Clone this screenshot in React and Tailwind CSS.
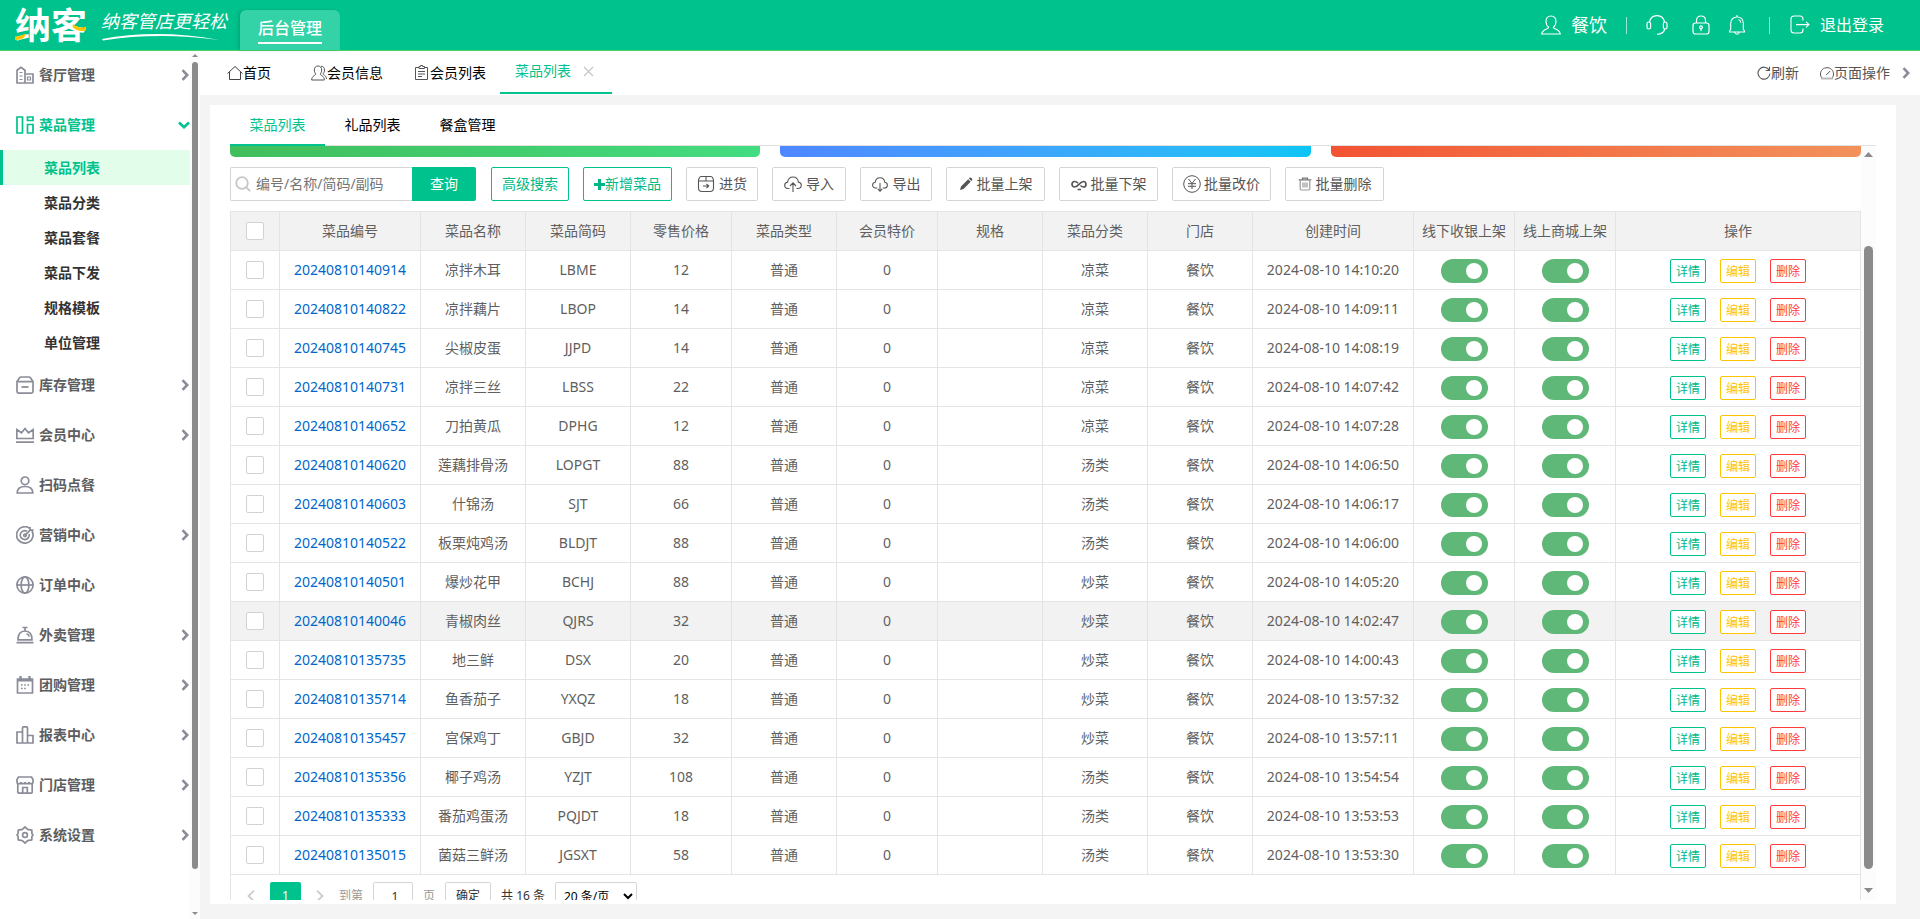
import React from "react";

const dishes = [
  ["20240810140914", "凉拌木耳", "LBME", 12, "凉菜", "2024-08-10 14:10:20"],
  ["20240810140822", "凉拌藕片", "LBOP", 14, "凉菜", "2024-08-10 14:09:11"],
  ["20240810140745", "尖椒皮蛋", "JJPD", 14, "凉菜", "2024-08-10 14:08:19"],
  ["20240810140731", "凉拌三丝", "LBSS", 22, "凉菜", "2024-08-10 14:07:42"],
  ["20240810140652", "刀拍黄瓜", "DPHG", 12, "凉菜", "2024-08-10 14:07:28"],
  ["20240810140620", "莲藕排骨汤", "LOPGT", 88, "汤类", "2024-08-10 14:06:50"],
  ["20240810140603", "什锦汤", "SJT", 66, "汤类", "2024-08-10 14:06:17"],
  ["20240810140522", "板栗炖鸡汤", "BLDJT", 88, "汤类", "2024-08-10 14:06:00"],
  ["20240810140501", "爆炒花甲", "BCHJ", 88, "炒菜", "2024-08-10 14:05:20"],
  ["20240810140046", "青椒肉丝", "QJRS", 32, "炒菜", "2024-08-10 14:02:47"],
  ["20240810135735", "地三鲜", "DSX", 20, "炒菜", "2024-08-10 14:00:43"],
  ["20240810135714", "鱼香茄子", "YXQZ", 18, "炒菜", "2024-08-10 13:57:32"],
  ["20240810135457", "宫保鸡丁", "GBJD", 32, "炒菜", "2024-08-10 13:57:11"],
  ["20240810135356", "椰子鸡汤", "YZJT", 108, "汤类", "2024-08-10 13:54:54"],
  ["20240810135333", "番茄鸡蛋汤", "PQJDT", 18, "汤类", "2024-08-10 13:53:53"],
  ["20240810135015", "菌菇三鲜汤", "JGSXT", 58, "汤类", "2024-08-10 13:53:30"],
];

const HIGHLIGHTED = "20240810140046";

const columns = [
  ["菜品编号", "w-[141px]"],
  ["菜品名称", "w-[105px]"],
  ["菜品简码", "w-[105px]"],
  ["零售价格", "w-[101px]"],
  ["菜品类型", "w-[105px]"],
  ["会员特价", "w-[101px]"],
  ["规格", "w-[105px]"],
  ["菜品分类", "w-[105px]"],
  ["门店", "w-[105px]"],
  ["创建时间", "w-[161px]"],
  ["线下收银上架", "w-[101px]"],
  ["线上商城上架", "w-[101px]"],
  ["操作", ""],
];

function Icon({ className = "size-[18px]", box = 18, width = 1.7, children }) {
  return (
    <svg
      className={className + " shrink-0"}
      viewBox={`0 0 ${box} ${box}`}
      fill="none"
      stroke="currentColor"
      strokeWidth={width}
      aria-hidden="true"
    >
      {children}
    </svg>
  );
}

const sideIcons = {
  building: (
    <>
      <path d="M1 17V4.2L5 1.2l4 3V17" />
      <path d="M9 8h8v9H.4" />
      <path d="M3.5 6.5h3M3.5 10h3M3.5 13.5h3M11.5 11h3v3h-3z" strokeWidth="1.2" />
    </>
  ),
  board: (
    <>
      <path d="M1 1h5.5v16H1zM11.5 1h5.5v3.5h-5.5zM11.5 8.5h5.5V17h-5.5z" />
    </>
  ),
  box: (
    <>
      <path d="M1 6.2v9.3c0 1 .6 1.6 1.6 1.6h12.8c1 0 1.6-.6 1.6-1.6V6.2" />
      <path d="M1 5.6h16L14.6 2c-.5-.7-.9-1-1.7-1H5.1c-.8 0-1.2.3-1.7 1z" />
      <path d="M5.5 11h7" strokeWidth="1.8" />
    </>
  ),
  crown: <path d="M.8 12.5V3.5L5.5 6.8 9 2.5l3.5 4.3 4.7-3.3v9zM0 16.2h18" />,
  user: (
    <>
      <circle cx="9" cy="4.8" r="3.8" />
      <path d="M1.2 17c0-4.3 3-6.5 7.8-6.5s7.8 2.2 7.8 6.5z" />
    </>
  ),
  target: (
    <>
      <path d="M13.6 2.3A8.2 8.2 0 1 0 16 5" />
      <path d="M11 5.2A4.5 4.5 0 1 0 13.1 8" />
      <circle cx="9" cy="9.3" r="1.3" />
      <path d="M9 9.3 15 3.2M14 1v3.2h3.5" />
    </>
  ),
  globe: (
    <>
      <circle cx="9" cy="9" r="8.1" />
      <ellipse cx="9" cy="9" rx="3.9" ry="8.1" />
      <path d="M1 9h16" />
    </>
  ),
  bell: (
    <>
      <path d="M2 13.8C1.8 8 4.6 5 9 5s7.2 3 7 8.8zM.5 16.7h17M9 5V2M6.5 1.5h5" />
      <path d="M10.5 7.8c1.5.4 2.4 1.3 2.8 2.8" />
    </>
  ),
  calendar: (
    <>
      <path d="M1.5 3h15v14h-15z" />
      <path d="M1.5 4.2h15M4.5 0v4M13.5 0v4" strokeWidth="2.4" />
      <path d="M5 9h1.6M8.2 9h1.6M11.5 9h1.6M5 12.5h1.6M8.2 12.5h1.6" />
    </>
  ),
  bars: <path d="M1 6h5.5v11H1zM6.5 17V1.8c0-.6.3-.9.9-.9h3.2c.6 0 .9.3.9.9V17zM11.5 9.5H17V17h-5.5" />,
  shop: (
    <>
      <path d="M1.8 8v8.2c0 .6.4.9 1 .9h12.4c.6 0 1-.3 1-.9V8" />
      <path d="M2.5 1h13L17 3.5V6c0 1-.8 1.7-1.9 1.7S13 7 13 6c0 1-.9 1.7-2 1.7S9 7 9 6c0 1-.9 1.7-2 1.7S5 7 5 6c0 1-.9 1.7-2.1 1.7S1 7 1 6V3.5zM6.7 17v-5.5h4.6V17" />
    </>
  ),
  gear: (
    <>
      <path d="M9 .9 11.6 3.4l4.2.7.1 3.400L17 9l-1.100 1.500-.1 3.400-4.200.7L9 17.100l-2.600-2.500-4.200-.7-.1-3.400L1 9l1.100-1.500.1-3.400 4.200-.7z" strokeLinejoin="round" />
      <circle cx="9" cy="9" r="2.4" />
    </>
  ),
};

const menu = [
  ["餐厅管理", "building", true],
  ["菜品管理", "board", true, ["菜品列表", "菜品分类", "菜品套餐", "菜品下发", "规格模板", "单位管理"]],
  ["库存管理", "box", true],
  ["会员中心", "crown", true],
  ["扫码点餐", "user", false],
  ["营销中心", "target", true],
  ["订单中心", "globe", false],
  ["外卖管理", "bell", true],
  ["团购管理", "calendar", true],
  ["报表中心", "bars", true],
  ["门店管理", "shop", true],
  ["系统设置", "gear", true],
];

function Chevron({ down }) {
  return (
    <svg
      className={down ? "h-2 w-3 shrink-0 text-[#00c28c]" : "h-3 w-2 shrink-0 text-[#8a8c98]"}
      viewBox={down ? "0 0 12 8" : "0 0 8 12"}
      fill="none"
      stroke="currentColor"
      strokeWidth="2.6"
      aria-hidden="true"
    >
      <path d={down ? "M1 1.5 6 6.2 11 1.5" : "M1.5 1.2 6.2 6 1.5 10.8"} />
    </svg>
  );
}

function Header() {
  return (
    <header className="relative z-10 flex h-[50px] shrink-0 items-center bg-[#00c28c] pr-9 text-white shadow-[0_1px_0_#4bd06f]">
      <div className="flex w-60 items-center pl-[15px]">
        <div className="relative h-[50px] w-[72px]">
          <span className="text-[36px] leading-[52px] font-bold">纳客</span>
          <svg className="absolute inset-0" viewBox="0 0 72 50" fill="#fdc400" aria-hidden="true">
            <path d="M0 36.500c4 0 7-1 10.500-3l-1 3.500c-3 2.500-6 3.200-9.500 3zM58 24c4 3.500 8 4.300 13 2.500l-.5 4c-5 1.500-9 .2-13-3.500z" />
          </svg>
        </div>
        <div className="ml-[14px] flex flex-col">
          <span className="text-[18px] leading-6 italic">纳客管店更轻松</span>
          <svg className="h-2 w-[120px]" viewBox="0 0 120 8" aria-hidden="true">
            <path d="M1 6C36-.5 76-1 118 7 76 1.5 38 2 2 7.5z" fill="#fff" />
          </svg>
        </div>
      </div>
      <a href="#admin" className="flex h-10 w-[100px] flex-col items-center self-end rounded-t-md bg-[#33d2a7] pt-[7px] shadow-[-2px_0_3px_rgba(0,120,80,0.3)]">
        <span className="border-b-2 border-white pb-[3px] text-base leading-[22px] font-medium">后台管理</span>
      </a>
      <div className="ml-auto flex items-center">
        <a href="#user" className="flex items-center gap-[10px]">
          <Icon className="size-5" box={20} width={1.1}>
            <path d="M7.7 12.3C5.8 11 5 9 5 6.3 5 3 7 1 10 1s5 2 5 5.3c0 2.7-.8 4.7-2.7 6 .1 2.2 6.2 1.5 7 6.7H.7c.8-5.200 6.900-4.500 7-6.700z" />
          </Icon>
          <span className="text-[18px]">餐饮</span>
        </a>
        <span className="mx-[19px] h-[17px] w-px bg-white/60" />
        <button aria-label="客服">
          <Icon className="size-[22px]" box={22} width={1.2}>
            <path d="M3.5 8.2C4.2 4 7.200 1.700 11 1.700S17.800 4 18.500 8.200" />
            <rect x="1" y="8" width="3.600" height="7" rx="1.800" />
            <rect x="17.400" y="8" width="3.600" height="7" rx="1.800" />
            <path d="M18.800 15c-.9 3.300-3.600 5.200-7.800 5.400" />
          </Icon>
        </button>
        <button aria-label="锁屏" className="ml-[23px]">
          <Icon className="size-5" box={20} width={1.2}>
            <path d="M5.5 8V5.5C5.5 2.5 7.3 1 10 1s4.5 1.5 4.5 4.5V8M2 10.500C2 8.800 2.800 8 4.500 8h11c1.700 0 2.500.8 2.500 2.500v6c0 1.700-.8 2.500-2.500 2.500h-11C2.800 19 2 18.200 2 16.500zM10 13.700v2.300" />
            <circle cx="10" cy="12.3" r="1.4" />
          </Icon>
        </button>
        <button aria-label="通知" className="ml-4">
          <Icon className="size-5" box={20} width={1.1}>
            <path d="M10 0v2M2.500 17v-1l1.200-1.500V8.500C3.700 4.500 6.200 2 10 2s6.300 2.500 6.300 6.500v6l1.200 1.500v1zM7.800 17.500c.3 2.200 4.100 2.200 4.400 0M11.500 4.500c1.500.6 2.300 1.800 2.400 3.300" />
          </Icon>
        </button>
        <span className="mr-5 ml-[22px] h-[17px] w-px bg-white/60" />
        <a href="#logout" className="flex items-center gap-[10px]">
          <Icon className="size-5" box={20} width={1.1}>
            <path d="M13 5.500V4c0-2-1-3-3-3H4C2 1 1 2 1 4v11c0 2 1 3 3 3h6c2 0 3-1 3-3v-1.500M6 9.600h13M16 6.800l3 2.800-3 2.800" />
          </Icon>
          <span className="text-base">退出登录</span>
        </a>
      </div>
    </header>
  );
}

function Sidebar() {
  return (
    <aside className="flex w-[200px] shrink-0 bg-white">
      <nav className="w-[190px] overflow-hidden text-sm font-bold">
        {menu.map(([label, icon, arrow, children]) => (
          <div key={label}>
            <a
              href={"#" + icon}
              className={
                "flex h-[50px] items-center gap-[5px] pl-4 " +
                (children ? "text-[#00c28c]" : "pr-px text-[#5c5d60]")
              }
            >
              <span className={children ? "text-[#00c28c]" : "text-[#8a8c98]"}>
                <Icon>{sideIcons[icon]}</Icon>
              </span>
              <span className="flex-1">{label}</span>
              {arrow && <Chevron down={!!children} />}
            </a>
            {children &&
              children.map((c, i) => (
                <a
                  key={c}
                  href={"#sub" + i}
                  className={
                    "flex h-[35px] items-center border-l-[3px] pl-[41px] " +
                    (i === 0
                      ? "border-[#00c28c] bg-[#e3fdeb] text-[#00c28c]"
                      : "border-transparent text-[#333]")
                  }
                >
                  {c}
                </a>
              ))}
          </div>
        ))}
      </nav>
      <div className="flex w-[10px] flex-col items-center bg-[#fcfcfc] pt-1" aria-hidden="true">
        <svg className="h-[3px] w-[6px]" viewBox="0 0 6 3" fill="#8b8b8b"><path d="M0 3 3 0l3 3z" /></svg>
        <div className="mt-[5px] mb-[43px] w-[6px] flex-1 rounded-full bg-[#8b8b8b]" />
        <svg className="mb-1 h-[3px] w-[6px]" viewBox="0 0 6 3" fill="#8b8b8b"><path d="M0 0 3 3l3-3z" /></svg>
      </div>
    </aside>
  );
}

function PageTabs() {
  return (
    <div className="flex h-[45px] shrink-0 items-center bg-white pr-[10px] pl-[27px] text-sm text-black">
      <a href="#home" className="flex items-center pr-10">
        <Icon className="size-4 text-[#444]" box={16} width={1}>
          <path d="M.5 8.500 8 1.500l7.500 7M2.500 7V14.500h11V7" />
        </Icon>
        首页
      </a>
      <a href="#member" className="flex items-center pr-[31px]">
        <Icon className="size-4 text-[#555]" box={16} width={1}>
          <path d="M4.800 9C3.800 8 3.300 6.500 3.300 5c0-2.500 1.500-4 3.700-4s3.700 1.500 3.700 4c0 1.500-.5 3-1.500 4 .2 1.700 3.800 1.300 4.200 6H.600C1 10.300 4.600 10.700 4.800 9zM10 1.300c2.200-.2 3.500 1.400 3.500 3.700 0 1.700-.5 2.800-1.500 3.700.2 1.600 3.300 1.500 3.500 5.300" />
        </Icon>
        会员信息
      </a>
      <a href="#members" className="flex items-center pr-[14px]">
        <Icon className="size-4 text-[#555]" box={16} width={1}>
          <path d="M5 2.500H1.500v12h12v-12H10.500M5 3.500v-2h1.500V.5h2v1H10.500v2zM4 6.500h7M4 9h7M4 11.500h4" />
        </Icon>
        会员列表
      </a>
      <div className="flex h-11 items-center self-start border-b-2 border-[#00c28c] pr-[18px] pl-[15px] text-[#00c28c]">
        <a href="#dishes">菜品列表</a>
        <button aria-label="关闭" className="ml-3 text-[#c6c6c6]">
          <Icon className="size-[11px]" box={11} width={1.2}>
            <path d="m1 1 9 9M10 1l-9 9" />
          </Icon>
        </button>
      </div>
      <div className="ml-auto flex items-center text-[#555]">
        <button className="flex items-center">
          <Icon className="size-[14px]" box={14} width={1.1}>
            <path d="M12.300 4.300A6 6 0 1 0 13 7.500M12.500.8v3.700H8.800" />
          </Icon>
          刷新
        </button>
        <button className="ml-[21px] flex items-center">
          <Icon className="size-[14px]" box={14} width={1}>
            <path d="M2 12C.9 10.800.5 9.600.5 8c0-3.600 2.800-6.300 6.500-6.300s6.500 2.700 6.500 6.300c0 1.600-.4 2.800-1.500 4M6.200 9l4-4" />
            <path d="M1 12.500h12" stroke="#bbb" strokeWidth="2" />
          </Icon>
          页面操作
        </button>
        <span className="ml-3 flex">
          <Chevron />
        </span>
      </div>
    </div>
  );
}

const toolButton =
  "flex h-[34px] items-center justify-center rounded-[2px] border border-[#d5d5d5] bg-white text-sm text-[#555]";

function Toolbar() {
  return (
    <div className="mt-[10px] flex gap-[14px] text-sm">
      <form className="mr-px flex h-[34px] w-[246px]" onSubmit={(e) => e.preventDefault()}>
        <label className="flex min-w-0 flex-1 items-center rounded-l-[2px] border border-r-0 border-[#d5d5d5] pl-1">
          <Icon className="size-4 text-[#c6c6c6]" box={16} width={1.8}>
            <circle cx="7" cy="7" r="5.8" />
            <path d="m11.300 11.300 3.900 3.900" />
          </Icon>
          <input
            aria-label="搜索菜品"
            placeholder="编号/名称/简码/副码"
            className="ml-[5px] min-w-0 flex-1 outline-none placeholder:text-[#757575]"
          />
        </label>
        <button className="w-16 rounded-r-[2px] bg-[#00c28c] text-white">查询</button>
      </form>
      <button className="h-[34px] w-[78px] rounded-[2px] border border-[#00c28c] text-[#00b886]">高级搜索</button>
      <button className="flex h-[34px] w-[89px] items-center justify-center rounded-[2px] border border-[#00c28c] text-[#00b886]">
        <Icon className="size-[11px]" box={11} width={3}>
          <path d="M5.500 0v11M0 5.500h11" />
        </Icon>
        新增菜品
      </button>
      <button className={toolButton + " w-[72px] gap-1"}>
        <Icon className="size-[18px]" width={1.1}>
          <path d="M1.500 6h15M4 1.500h10c1.300 0 2.500 2.500 2.500 4.500v7c0 2.500-1 3.500-3.500 3.500H5c-2.500 0-3.500-1-3.500-3.500V6c0-2 1.200-4.500 2.500-4.500zM9 1.500V6M6 11h5.500M9.500 9l2.200 2-2.200 2" />
        </Icon>
        进货
      </button>
      <button className={toolButton + " w-[74px] gap-1"}>
        <Icon className="size-[18px]" width={1.1}>
          <path d="M5.500 13.500H4.200C2 13.500.7 12.200.7 10.300c0-1.700 1.100-2.900 2.900-3.200C4 4 6 2 9 2s5 2 5.400 5.100c1.800.3 2.900 1.500 2.900 3.200 0 1.900-1.300 3.200-3.500 3.200h-1.300M9 17V8M6 11l3-3.200L12 11" />
        </Icon>
        导入
      </button>
      <button className={toolButton + " w-[72px] gap-[5px]"}>
        <Icon className="size-4" width={1.2}>
          <path d="M6 13.500H4.200C2 13.500.7 12.200.7 10.300c0-1.700 1.100-2.900 2.900-3.200C4 4 6 2 9 2s5 2 5.400 5.100c1.800.3 2.900 1.500 2.900 3.200 0 1.900-1.300 3.200-3.500 3.200H12M9 8v9M6.500 14.500 9 17.200l2.500-2.700" />
        </Icon>
        导出
      </button>
      <button className={toolButton + " w-[99px] gap-1"}>
        <svg className="size-[14px]" viewBox="0 0 14 14" fill="currentColor" aria-hidden="true">
          <path d="M1 13l1-3.500L9.200 2.300l2.500 2.500L4.500 12zM9.900 1.600l.8-.8c1-.8 3.300 1.300 2.500 2.500l-.8.8z" />
        </svg>
        批量上架
      </button>
      <button className={toolButton + " w-[99px] gap-1"}>
        <Icon className="size-4" box={16} width={1.7}>
          <path d="M9.500 9.500c1 1 1.800 1.500 3 1.500 1.500 0 2.500-1.200 2.500-2.800S14 5.500 12.500 5.500C9 5.500 7 11 3.700 11 2.100 11 1 9.800 1 8.200s1-2.700 2.700-2.700c1.300 0 2.300.7 3.300 1.700M6.500 13.500H10" />
        </Icon>
        批量下架
      </button>
      <button className={toolButton + " w-[99px] gap-[3px]"}>
        <Icon className="size-[18px]" width={1}>
          <circle cx="9" cy="9" r="8.3" />
          <path d="m5.500 4 3.500 4.500L12.500 4M9 8.500V14M5 8.700h8M5 11.300h8" />
        </Icon>
        批量改价
      </button>
      <button className={toolButton + " w-[99px] gap-1"}>
        <Icon className="size-[14px] text-[#777]" box={14} width={1.2}>
          <path d="M.7 2.800h12.600M4.500 2.800V1.200h5v1.600" />
          <path d="M2.200 3v8.800c0 .8.4 1.200 1.200 1.200h7.200c.8 0 1.200-.4 1.200-1.200V3M5 5.500v5M7 5.500v5M9 5.500v5" stroke="#999" />
        </Icon>
        批量删除
      </button>
    </div>
  );
}

const checkClass =
  "block mx-auto size-[18px] appearance-none rounded-[2px] border border-[#d2d2d2] bg-white checked:bg-[#00c28c]";

function Switch({ label }) {
  return (
    <input
      type="checkbox"
      role="switch"
      aria-label={label}
      defaultChecked
      className="mx-auto flex h-6 w-[47px] appearance-none items-center rounded-full bg-[#ccc] px-[6px] before:block before:size-4 before:rounded-full before:bg-white checked:justify-end checked:bg-[#5fb878]"
    />
  );
}

const actionButton = "h-6 w-9 rounded-[2px] border bg-white pt-[2px] text-xs leading-5";

function DishTable() {
  return (
    <table className="mt-[10px] w-full table-fixed border-collapse text-center text-sm text-[#5f5f5f] [&_td]:border [&_td]:border-[#e4e4e4] [&_th]:border [&_th]:border-[#e4e4e4]">
      <colgroup>
        <col className="w-[49px]" />
        {columns.map(([name, w]) => (
          <col key={name} className={w} />
        ))}
      </colgroup>
      <thead>
        <tr className="h-[39px] bg-[#f2f2f2]">
          <th scope="col">
            <input type="checkbox" aria-label="全选" className={checkClass} />
          </th>
          {columns.map(([name]) => (
            <th key={name} scope="col" className="font-normal whitespace-nowrap">
              {name}
            </th>
          ))}
        </tr>
      </thead>
      <tbody>
        {dishes.map(([id, name, code, price, kind, time]) => (
          <tr key={id} className={"h-[39px] whitespace-nowrap " + (id === HIGHLIGHTED ? "bg-[#f2f2f2]" : "bg-white")}>
            <td>
              <input type="checkbox" aria-label={"选择" + name} className={checkClass} />
            </td>
            <td>
              <a href={"#" + id} className="text-[#0066cc]">{id}</a>
            </td>
            <td>{name}</td>
            <td>{code}</td>
            <td>{price}</td>
            <td>普通</td>
            <td>0</td>
            <td></td>
            <td>{kind}</td>
            <td>餐饮</td>
            <td>{time}</td>
            <td className="pt-[2px]"><Switch label={name + "线下收银上架"} /></td>
            <td className="pt-[2px]"><Switch label={name + "线上商城上架"} /></td>
            <td className="pt-[2px]">
              <div className="flex justify-center gap-[14px]">
                <button className={actionButton + " border-[#00c28c] text-[#00b886]"}>详情</button>
                <button className={actionButton + " border-[#ffc400] text-[#ffc400]"}>编辑</button>
                <button className={actionButton + " border-[#ff3b3b] text-[#ff3b3b]"}>删除</button>
              </div>
            </td>
          </tr>
        ))}
      </tbody>
    </table>
  );
}

function Pagination() {
  return (
    <div className="flex items-center border-x border-[#e4e4e4] pt-[7px] pb-5 pl-4 text-xs text-[#333]">
      <button aria-label="上一页" className="text-[#ccc]">
        <svg className="h-3 w-2" viewBox="0 0 8 12" fill="none" stroke="currentColor" strokeWidth="1.8" aria-hidden="true">
          <path d="M7 .7 1.500 6 7 11.300" />
        </svg>
      </button>
      <button className="ml-[15px] h-[28px] w-[31px] rounded-[2px] bg-[#00c28c] text-white">1</button>
      <button aria-label="下一页" className="ml-[15px] text-[#ccc]">
        <svg className="h-3 w-2" viewBox="0 0 8 12" fill="none" stroke="currentColor" strokeWidth="1.8" aria-hidden="true">
          <path d="M1 .7 6.500 6 1 11.300" />
        </svg>
      </button>
      <label className="ml-[15px] flex items-center text-[#999]">
        到第
        <input
          defaultValue="1"
          className="mx-[10px] h-[28px] w-10 rounded-[2px] border border-[#d5d5d5] pl-1 text-center text-[#333]"
        />
        页
      </label>
      <button className="ml-[10px] h-[28px] w-[46px] rounded-[2px] border border-[#d5d5d5]">确定</button>
      <span className="ml-[10px]">共 16 条</span>
      <select aria-label="每页条数" className="ml-[10px] h-[28px] w-[82px] rounded-[2px] border border-[#d5d5d5] pl-1 text-black">
        <option>20 条/页</option>
        <option>50 条/页</option>
      </select>
    </div>
  );
}

export default function App() {
  return (
    <div className="flex h-screen flex-col overflow-hidden bg-[#f4f4f4] font-['Noto_Sans','Noto_Sans_CJK_SC',sans-serif]">
      <Header />
      <div className="flex min-h-0 flex-1">
        <Sidebar />
        <main className="flex min-w-0 flex-1 flex-col">
          <PageTabs />
          <section className="mt-[10px] mr-6 mb-[15px] ml-[10px] flex min-h-0 flex-1 flex-col bg-white px-5 pb-1">
            <div className="flex h-[41px] shrink-0 border-b border-[#e2e2e2] text-sm text-black">
              <a href="#list" className="flex h-[41px] w-[95px] items-center justify-center border-b-2 border-[#00c28c] text-[#00c28c]">
                菜品列表
              </a>
              <a href="#gifts" className="flex w-[95px] items-center justify-center">礼品列表</a>
              <a href="#boxes" className="flex w-[95px] items-center justify-center">餐盒管理</a>
            </div>
            <div className="flex min-h-0 flex-1">
              <div className="min-w-0 flex-1 overflow-hidden">
                <div className="grid grid-cols-3 gap-5">
                  <div className="h-[11px] rounded-b-[5px] bg-linear-to-r from-[#41be5c] to-[#43dc80]" />
                  <div className="h-[11px] rounded-b-[5px] bg-linear-to-r from-[#4f87ff] to-[#0bc5f5]" />
                  <div className="h-[11px] rounded-b-[5px] bg-linear-to-r from-[#f25332] to-[#f2915b]" />
                </div>
                <Toolbar />
                <DishTable />
                <Pagination />
              </div>
              <div className="flex w-[15px] flex-col items-center bg-[#fcfcfc] pt-[6px]" aria-hidden="true">
                <svg className="h-[5px] w-[9px]" viewBox="0 0 9 5" fill="#8b8b8b"><path d="M0 5 4.500 0 9 5z" /></svg>
                <div className="mt-[89px] mb-[19px] w-[9px] flex-1 rounded-full bg-[#8b8b8b]" />
                <svg className="mb-[7px] h-[5px] w-[9px]" viewBox="0 0 9 5" fill="#8b8b8b"><path d="M0 0 4.500 5 9 0z" /></svg>
              </div>
            </div>
          </section>
        </main>
      </div>
    </div>
  );
}
